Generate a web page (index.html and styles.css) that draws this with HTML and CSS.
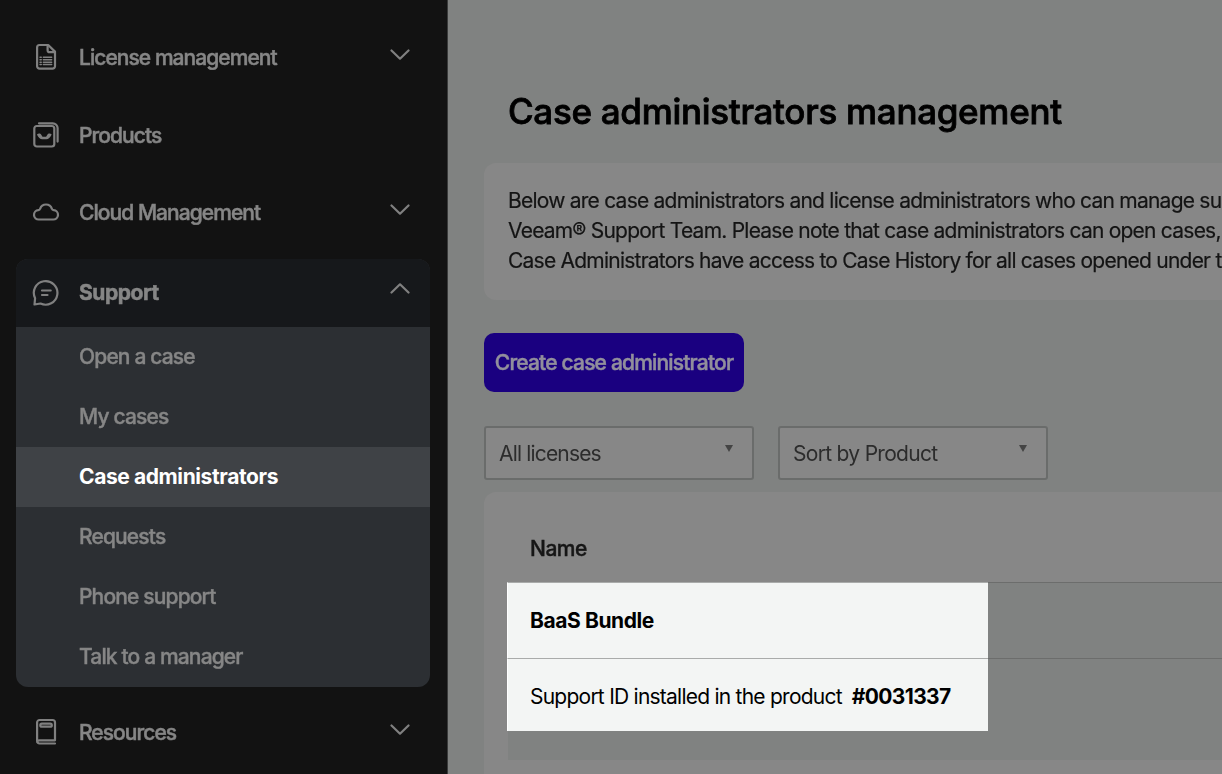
FILE: index.html
```html
<!DOCTYPE html>
<html lang="en">

<head>
    <meta charset="UTF-8">
    <meta name="viewport" content="width=device-width, initial-scale=1.0">
    <title>Case administrators management</title>
    <link rel="stylesheet" href="styles.css">
</head>

<body>
    <nav class="sidebar">
        <a class="nav-item dim">
            <svg class="icon" viewBox="0 0 28 28">
                <path d="M7.500 2h8.700L23 8.600v14.600a2.400 2.400 0 0 1-2.400 2.400H7.500a2.400 2.400 0 0 1-2.400-2.400V4.400A2.400 2.400 0 0 1 7.500 2z" />
                <path d="M15.600 2.500v4.700a2 2 0 0 0 2 2h5" />
                <path class="thin" d="M8 14.200h1.300M8 16.700h1.300M8 19.200h1.300M8 21.500h1.300M11.300 14.200h8.400M11.300 16.700h8.400M11.300 19.200h8.400M11.300 21.500h8.400" />
            </svg>
            <span class="label">License management</span>
            <svg class="chevron" viewBox="0 0 20 12"><path d="M1.500 1.500l8.500 8.200 8.500-8.200" /></svg>
        </a>
        <a class="nav-item dim">
            <svg class="icon" viewBox="0 0 28 28">
                <rect x="2.300" y="5" width="20" height="20.500" rx="2.500" />
                <path d="M7 2.300h13.800a4.800 4.800 0 0 1 4.800 4.800v13.500" />
                <path class="solid" d="M4.900 13.600c1.700-1.600 3.400-1.200 4.500.4l1.100 1.800h3.600l1.100-1.800c1.100-1.600 2.800-2 4.500-.4-1.500 3-3.200 4.700-5.400 4.700h-4c-2.200 0-3.900-1.700-5.400-4.700z" />
            </svg>
            <span class="label">Products</span>
        </a>
        <a class="nav-item cloud dim">
            <svg class="icon" viewBox="0 0 28 28">
                <path d="M7 22.500a4.700 4.700 0 0 1-.6-9.400c.8 0 1.500-.6 1.700-1.300a6.200 6.200 0 0 1 11.800 0c.2.700.9 1.300 1.700 1.300a4.700 4.700 0 0 1-.6 9.400z" />
            </svg>
            <span class="label">Cloud Management</span>
            <svg class="chevron" viewBox="0 0 20 12"><path d="M1.500 1.500l8.500 8.200 8.500-8.200" /></svg>
        </a>

        <div class="group">
            <a class="group-head dim">
                <svg class="icon" viewBox="0 0 28 28">
                    <path d="M2.500 25.500l.6-6.300A11.800 11.800 0 1 1 8.500 24.500z" />
                    <path d="M10 11.500h8.700M10 16h5.500" />
                </svg>
                <span class="label">Support</span>
                <svg class="chevron" viewBox="0 0 20 12"><path d="M1.500 10.500L10 2.300l8.500 8.200" /></svg>
            </a>
            <a class="sub-item"><span class="dim">Open a case</span></a>
            <a class="sub-item"><span class="dim">My cases</span></a>
            <a class="sub-item active">Case administrators</a>
            <a class="sub-item"><span class="dim">Requests</span></a>
            <a class="sub-item"><span class="dim">Phone support</span></a>
            <a class="sub-item"><span class="dim">Talk to a manager</span></a>
        </div>

        <a class="nav-item dim">
            <svg class="icon" viewBox="0 0 28 28">
                <path d="M23 25.500H7.500A2.400 2.400 0 0 1 5.100 23V4.500A2.500 2.500 0 0 1 7.600 2h12.900A2.500 2.500 0 0 1 23 4.500v17.800H7.500A2.400 2.400 0 0 0 5.100 24" />
                <rect x="8.300" y="5.700" width="11.500" height="3" rx="1.500" />
            </svg>
            <span class="label">Resources</span>
            <svg class="chevron" viewBox="0 0 20 12"><path d="M1.500 1.500l8.500 8.200 8.500-8.200" /></svg>
        </a>
    </nav>

    <main class="content">
        <h1 class="title dim">Case administrators management</h1>

        <div class="intro">
            <p class="dim">Below are case administrators and license administrators who can manage support</p>
            <p class="dim">Veeam® Support Team. Please note that case administrators can open cases,</p>
            <p class="dim">Case Administrators have access to Case History for all cases opened under the</p>
        </div>

        <button class="create-btn"><span class="dim">Create case administrator</span></button>

        <div class="filters">
            <div class="select dim"><span class="all">All licenses</span><i class="arrow"></i></div>
            <div class="select dim"><span>Sort by Product</span><i class="arrow"></i></div>
        </div>

        <div class="table">
            <div class="table-head"><span class="dim">Name</span></div>
            <div class="row">
                <div class="cell"><b>BaaS Bundle</b></div>
            </div>
            <div class="row row-last">
                <div class="cell"><span class="support-id">Support ID installed in the product</span><b class="number">#0031337</b></div>
            </div>
        </div>
    </main>
</body>

</html>
```
FILE: styles.css
```css
* {
    box-sizing: border-box;
}

body {
    display: flex;
    height: 774px;
    margin: 0;
    overflow: hidden;
    font-family: Inter, "Liberation Sans", sans-serif;
    font-size: 21px;
    background-color: #808281;
}

/* everything behind the spotlight is slightly out of focus */
.dim {
    filter: blur(0.7px);
}

/* Sidebar */
.sidebar {
    flex: none;
    width: 448px;
    padding: 18px 17px 0 16px;
    border-right: 1px solid #3a3b3b;
    background-color: #121212;
    color: #868686;
}

.nav-item,
.group-head {
    display: flex;
    align-items: center;
    height: 78px;
    padding: 0 20px 0 16px;
    font-weight: 500;
}

.cloud {
    padding-bottom: 2px;
}

.icon {
    width: 28px;
    height: 28px;
    margin-right: 19px;
}

.cloud .icon {
    margin-top: -3px;
}

.icon,
.chevron {
    fill: none;
    stroke: #808080;
    stroke-width: 2.200;
    stroke-linecap: round;
    stroke-linejoin: round;
}

.icon .thin {
    stroke-width: 1.4;
}

.icon .solid {
    fill: #808080;
    stroke: none;
}

.chevron {
    width: 20px;
    height: 12px;
    margin: -4px 0 0 auto;
}

.label {
    letter-spacing: -0.95px;
    -webkit-text-stroke: 0.5px currentColor;
}

.group {
    margin: 7px 0 6px;
    border-radius: 12px;
    overflow: hidden;
    background-color: #2c2f33;
}

.group-head {
    height: 68px;
    padding-bottom: 1px;
    background-color: #16181b;
    font-weight: 700;
}

.group-head .label {
    letter-spacing: -0.45px;
}

.group-head .chevron {
    margin-top: -9px;
}

.sub-item {
    display: flex;
    align-items: center;
    height: 60px;
    padding: 0 0 2px 63px;
    font-weight: 500;
    letter-spacing: -0.85px;
}

.sub-item .dim {
    -webkit-text-stroke: 0.4px currentColor;
}

.sub-item.active {
    background-color: #3f4246;
    color: #fff;
    font-weight: 700;
    letter-spacing: -0.4px;
}

/* Main column */
.content {
    flex: 1;
    min-width: 0;
    padding: 86px 0 0 36px;
    overflow: hidden;
}

.title {
    margin: 0 0 27px 24px;
    font-size: 35px;
    line-height: 50px;
    font-weight: 500;
    letter-spacing: -0.3px;
    color: #000;
    -webkit-text-stroke: 0.8px currentColor;
}

.intro {
    height: 137px;
    padding: 23px 0 0 24px;
    border-radius: 12px 0 0 12px;
    background-color: #878787;
    color: #141414;
}

.intro p {
    margin: 0;
    line-height: 30px;
    letter-spacing: -0.77px;
    white-space: nowrap;
    -webkit-text-stroke: 0.2px currentColor;
}

.create-btn {
    display: flex;
    align-items: center;
    justify-content: center;
    width: 260px;
    height: 59px;
    margin: 33px 0 34px;
    padding: 0;
    border: none;
    border-radius: 10px;
    background-color: #1a0080;
    color: #928f9c;
    font: inherit;
    font-weight: 500;
    letter-spacing: -0.82px;
    white-space: nowrap;
    -webkit-text-stroke: 0.5px currentColor;
}

.filters {
    display: flex;
    gap: 24px;
}

.select {
    display: flex;
    justify-content: space-between;
    width: 270px;
    height: 54px;
    padding: 0 19px 0 13px;
    border: 2px solid #6a6c6b;
    border-radius: 3px;
    background-color: #878787;
    color: #2c2c2c;
    line-height: 51px;
    letter-spacing: -0.7px;
}

.select .all {
    letter-spacing: -0.83px;
}

.arrow {
    height: 0;
    margin-top: 17px;
    border-left: 4px solid transparent;
    border-right: 4px solid transparent;
    border-top: 7px solid #444;
}

/* Table */
.table {
    height: 300px;
    margin-top: 12px;
    padding-left: 24px;
    border-radius: 12px 0 0 0;
    background-color: #878787;
    color: #000;
}

.table-head {
    height: 91px;
    padding: 42px 0 0 22px;
    border-bottom: 1px solid #6c6d6c;
    line-height: 30px;
    font-weight: 500;
    letter-spacing: -0.5px;
    color: #161616;
}

.table-head .dim {
    display: inline-block;
    -webkit-text-stroke: 0.4px currentColor;
}

.row {
    display: flex;
    height: 76px;
    border-bottom: 1px solid #6c6d6c;
    background-color: #808281;
}

.row-last {
    height: 101px;
    border-bottom: none;
}

/* spotlighted part of the rows */
.cell {
    display: flex;
    align-items: center;
    width: 481px;
    height: 77px;
    margin: -1px 0 0 -1px;
    padding-left: 22px;
    border: 1px solid #a9abaa;
    border-left-color: #fff;
    border-right: none;
    background-color: #f3f5f4;
    letter-spacing: -0.42px;
}

.row-last .cell {
    height: 73px;
    padding-top: 3px;
    border-bottom: none;
}

.support-id {
    letter-spacing: -0.76px;
}

.number {
    margin-left: 10px;
    letter-spacing: -0.65px;
}
```
